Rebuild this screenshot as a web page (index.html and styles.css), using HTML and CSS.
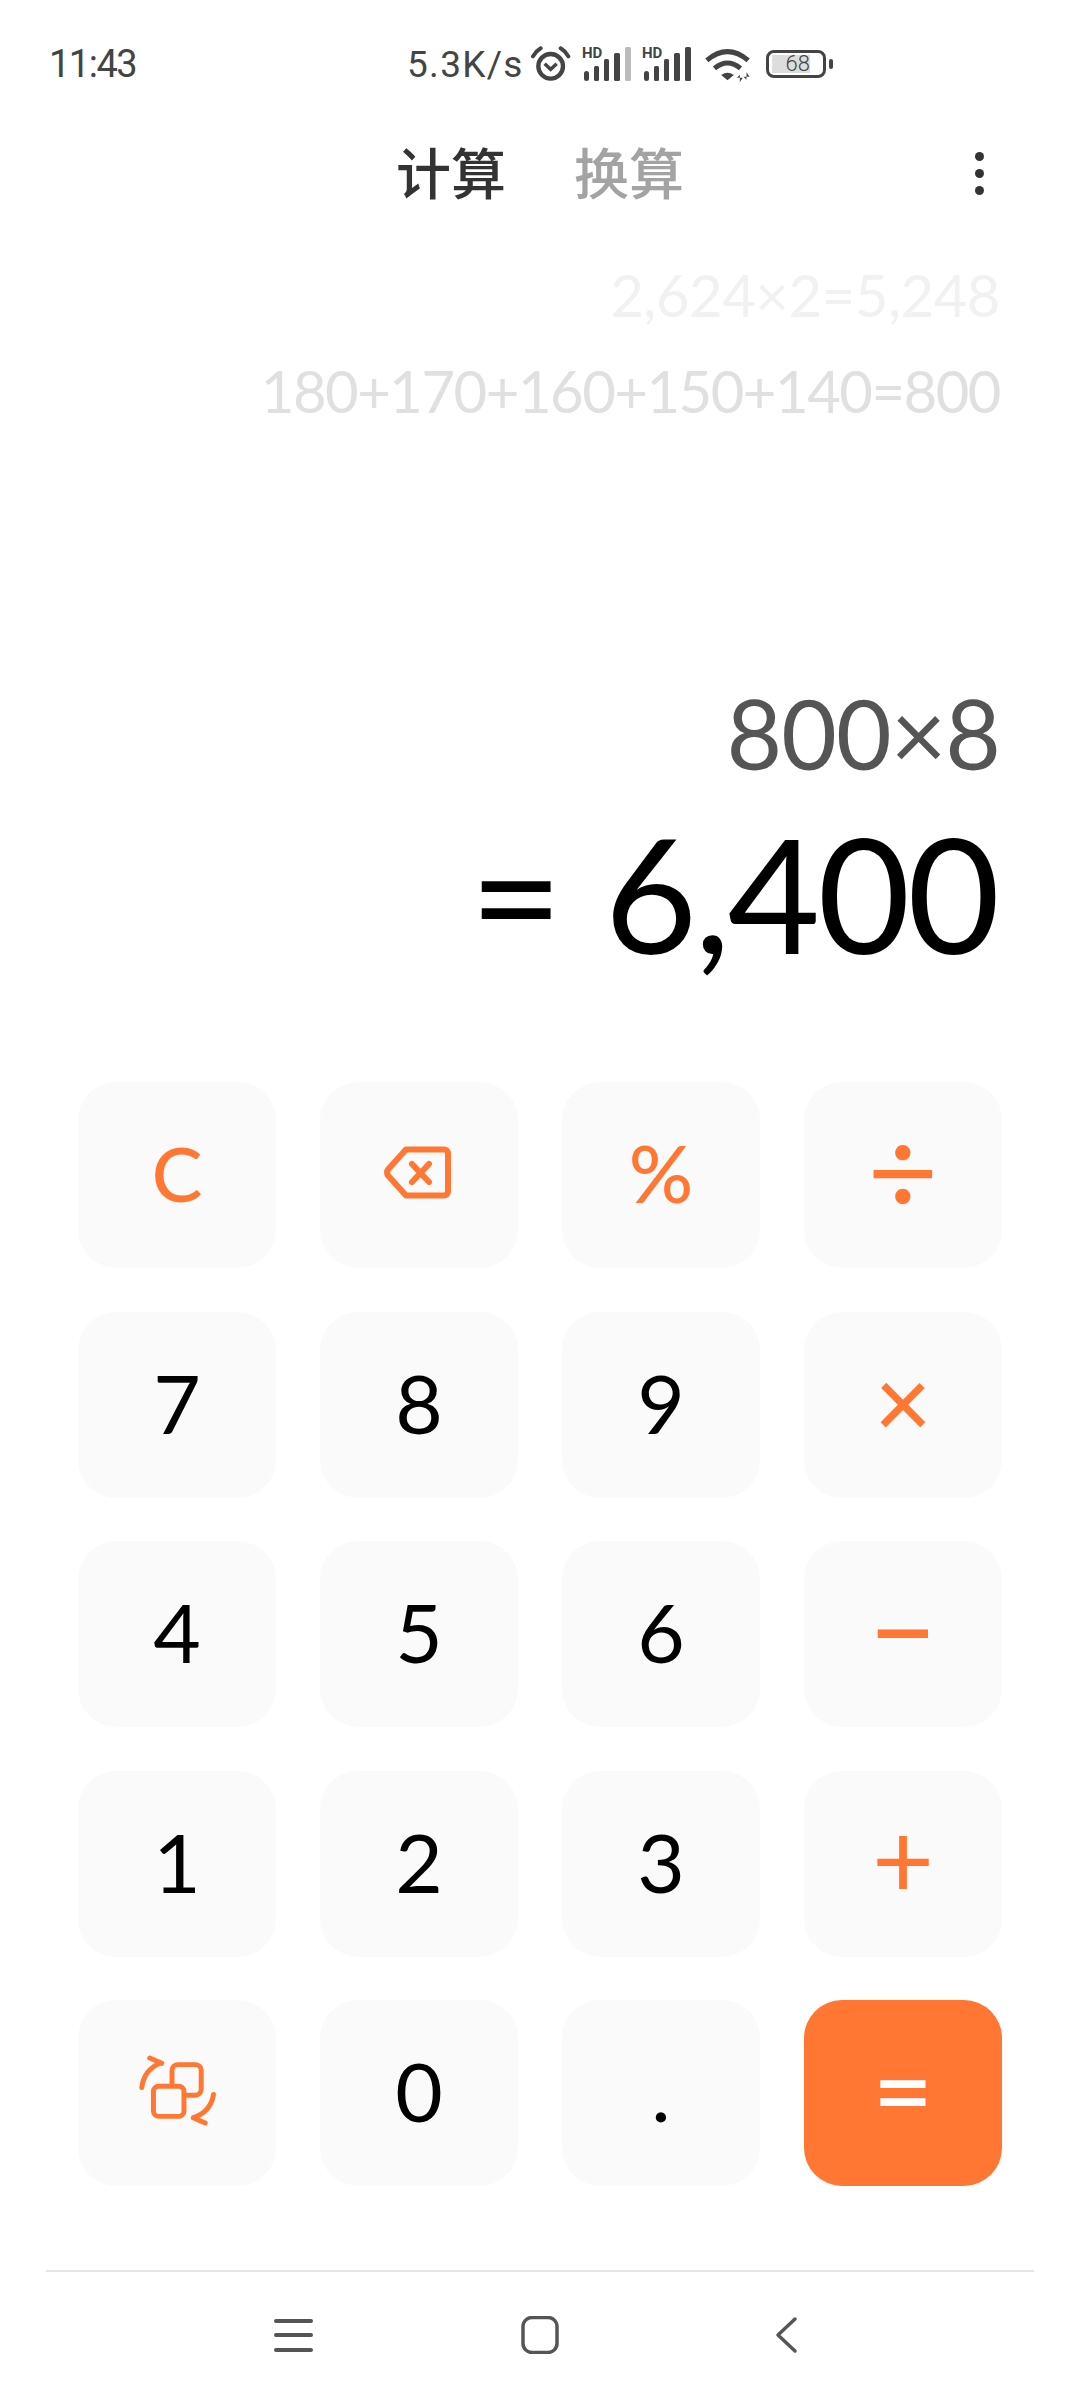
FILE: index.html
```html
<!DOCTYPE html>
<html lang="zh">
<head>
    <meta charset="UTF-8">
    <title>计算器</title>
    <link rel="stylesheet" href="styles.css">
</head>
<body>
    <div class="status">
        <span class="time">11:43</span>
        <span class="speed">5.3K/s</span>
        <svg class="ic-alarm" viewBox="450 75 126 111">
            <circle cx="512" cy="136" r="37" fill="none" stroke="#444" stroke-width="13"/>
            <path d="M494 128l18 17 18-17" fill="none" stroke="#444" stroke-width="10"/>
            <path d="M459 106q8-15 23-24M565 106q-8-15-23-24" fill="none" stroke="#444" stroke-width="12" stroke-linecap="round"/>
        </svg>
        <svg class="ic-signal" viewBox="0 -6 50 40">
            <text x="0" y="11" class="hd">HD</text>
            <rect x="2" y="24" width="5" height="10" rx="2.5" fill="#444"/>
            <rect x="12" y="19" width="5" height="15" rx="1.5" fill="#444"/>
            <rect x="22" y="12" width="5" height="22" rx="1.5" fill="#444"/>
            <rect x="32" y="6" width="6" height="28" rx="1.5" fill="#444"/>
            <rect x="43" y="0" width="6" height="34" rx="1.5" fill="#bbb"/>
        </svg>
        <svg class="ic-signal" viewBox="0 -6 50 40">
            <text x="0" y="11" class="hd">HD</text>
            <rect x="2" y="24" width="5" height="10" rx="2.5" fill="#444"/>
            <rect x="12" y="19" width="5" height="15" rx="1.5" fill="#444"/>
            <rect x="22" y="12" width="5" height="22" rx="1.5" fill="#444"/>
            <rect x="32" y="6" width="6" height="28" rx="1.5" fill="#444"/>
            <rect x="43" y="0" width="6" height="34" rx="1.5" fill="#444"/>
        </svg>
        <svg class="ic-wifi" viewBox="970 82 140 105">
            <path d="M978 122q62-52 124 0M1001 146q39-32 78 0" fill="none" stroke="#444" stroke-width="15"/>
            <path d="M1040 182l-19-16q19-14 38 0z" fill="#444"/>
            <path d="M1077 187v-22l-9 9h18zM1097 158v22l-9-9h18z" fill="#444"/>
        </svg>
        <div class="battery">
            <div class="battery-body"><span class="battery-level">68</span></div>
            <div class="battery-nib"></div>
        </div>
    </div>

    <div class="tabs">
        <div></div>
        <div class="tab-names">
            <span class="tab active">计算</span>
            <span class="tab">换算</span>
        </div>
        <div class="menu"><i></i><i></i><i></i></div>
    </div>

    <div class="display">
        <div class="history">
            <div class="old old-top">2,624×2=5,248</div>
            <div class="old">180+170+160+150+140=800</div>
        </div>
        <div class="expr">800×8</div>
        <div class="result"><span class="eq">=</span>6,400</div>
    </div>

    <div class="keypad">
        <button class="key op clear">C</button>
        <button class="key op">
            <svg class="ic-back" viewBox="0 0 70 53">
                <path d="M24 3.500H62a4 4 0 0 1 4 4V45.500a4 4 0 0 1-4 4H24L6 29.500q-2-3 0-6z" fill="none" stroke="#ff7733" stroke-width="6" stroke-linejoin="round"/>
                <path d="M30 18l17 18M47 18L30 36" fill="none" stroke="#ff7733" stroke-width="6" stroke-linecap="round"/>
            </svg>
        </button>
        <button class="key op pct">%</button>
        <button class="key op div">÷</button>
        <button class="key">7</button>
        <button class="key">8</button>
        <button class="key">9</button>
        <button class="key op mul">×</button>
        <button class="key">4</button>
        <button class="key">5</button>
        <button class="key">6</button>
        <button class="key op sub">−</button>
        <button class="key">1</button>
        <button class="key">2</button>
        <button class="key">3</button>
        <button class="key op add">+</button>
        <button class="key op">
            <svg class="ic-swap" viewBox="230 230 240 220">
                <rect x="335" y="262" width="88" height="92" rx="18" fill="none" stroke="#ff7733" stroke-width="15"/>
                <rect x="279" y="327" width="92" height="91" rx="16" fill="#fafafa" stroke="#ff7733" stroke-width="15"/>
                <path d="M244 331C248 296 266 272 298 258M268 242l36 16M460 352C455 385 435 410 400 422M435 438l-36-16" fill="none" stroke="#ff7733" stroke-width="15" stroke-linecap="round"/>
            </svg>
        </button>
        <button class="key">0</button>
        <button class="key">.</button>
        <button class="key equals">=</button>
    </div>

    <div class="nav">
        <svg class="ic-nav" viewBox="0 0 40 38">
            <path d="M3 5H38M3 19H38M3 34H38" fill="none" stroke="#555" stroke-width="4" stroke-linecap="round"/>
        </svg>
        <svg class="ic-nav" viewBox="0 0 40 38">
            <rect x="3" y="1.500" width="34" height="35" rx="9" fill="none" stroke="#555" stroke-width="3.500"/>
        </svg>
        <svg class="ic-nav" viewBox="0 0 40 38">
            <path d="M28 3L11 19l17 16" fill="none" stroke="#555" stroke-width="3.500" stroke-linecap="round" stroke-linejoin="round"/>
        </svg>
    </div>
</body>
</html>
```

FILE: styles.css
```css
body {
    margin: 0;
    width: 1080px;
    height: 2400px;
    overflow: hidden;
    background-color: white;
    font-family: Lato, "Noto Sans CJK SC", sans-serif;
}

/* status bar */
.status {
    display: flex;
    align-items: center;
    height: 124px;
    padding: 2px 0 0 49px;
    color: #444;
    font-family: Roboto, sans-serif;
}
.time {
    font-size: 38px;
    letter-spacing: -1.500px;
    width: 358px;
}
.speed {
    font-size: 37px;
    width: 123px;
    letter-spacing: 1.300px;
}
.ic-alarm {
    width: 42px;
    height: 37px;
    margin-right: 10px;
}
.ic-signal {
    width: 50px;
    height: 40px;
    margin: -6px 10px 0 0;
}
.hd {
    font-family: Roboto, sans-serif;
    font-weight: 700;
    font-size: 15px;
    fill: #444;
}
.ic-wifi {
    width: 47px;
    height: 35px;
    margin-left: 2px;
    margin-right: 15px;
}
.battery {
    display: flex;
    align-items: center;
    gap: 3px;
}
.battery-body {
    width: 60px;
    height: 28px;
    border: 3px solid #444;
    border-radius: 8px;
    box-sizing: border-box;
    padding: 2px 3px;
}
.battery-level {
    display: block;
    width: 38px;
    height: 18px;
    background-color: #ddd;
    text-align: right;
    font-size: 22px;
    font-weight: 300;
    line-height: 18px;
    white-space: nowrap;
}
.battery-nib {
    width: 4px;
    height: 10px;
    border-radius: 2px;
    background-color: #444;
}

/* calc / convert tabs */
.tabs {
    display: grid;
    grid-template-columns: 1fr auto 1fr;
    align-items: center;
    height: 88px;
}
.tab-names {
    display: flex;
    gap: 68px;
}
.tab {
    font-family: "Noto Sans CJK SC", sans-serif;
    font-size: 55px;
    font-weight: 500;
    color: #a3a3a3;
}
.tab.active {
    color: #333;
}
.menu {
    display: flex;
    flex-direction: column;
    gap: 8px;
    justify-self: end;
    margin: 6px 96px 0 0;
}
.menu i {
    width: 9px;
    height: 9px;
    border-radius: 50%;
    background-color: #333;
}

/* history and current result */
.display {
    display: flex;
    flex-direction: column;
    align-items: flex-end;
    height: 868px;
    padding-right: 80px;
}
.history {
    flex: 1;
    padding-top: 33px;
    text-align: right;
}
.old {
    font-size: 58px;
    font-weight: 400;
    letter-spacing: -1.500px;
    line-height: 96px;
    color: #e0e0e0;
}
.old-top {
    color: #f1f1f1;
    letter-spacing: -0.500px;
}
.expr {
    font-size: 96px;
    letter-spacing: -1px;
    line-height: 120px;
    color: #555;
}
.result {
    font-size: 160px;
    letter-spacing: -3px;
    line-height: 200px;
    color: black;
    margin: -1px 3px 90px 0;
}
.eq {
    margin-right: 45px;
}

/* keys */
.keypad {
    display: grid;
    grid-template-columns: repeat(4, 198px);
    grid-auto-rows: 186px;
    column-gap: 44px;
    row-gap: 43.5px;
    padding: 0 78px;
}
.key {
    display: flex;
    align-items: center;
    justify-content: center;
    padding: 0 0 6px;
    border: none;
    border-radius: 38px;
    background-color: #fafafa;
    color: black;
    font-family: Lato, sans-serif;
    font-size: 82px;
}
.key.op {
    color: #ff7733;
}
.key.clear {
    font-size: 76px;
    font-weight: 500;
    padding-bottom: 6px;
}
.key.pct {
    font-size: 80px;
    font-weight: 500;
    padding-bottom: 6px;
}
.key.div {
    font-size: 122px;
    padding-bottom: 12px;
}
.key.mul {
    font-size: 98px;
    font-weight: 500;
    padding-bottom: 10px;
}
.key.sub {
    font-size: 116px;
    font-weight: 500;
    padding-bottom: 12px;
}
.key.add {
    font-size: 107px;
    padding-bottom: 14px;
}
.key.equals {
    background-color: #ff7733;
    color: white;
    font-size: 104px;
    font-weight: 500;
    padding-bottom: 12px;
}
.ic-back {
    width: 70px;
    height: 53px;
    margin-right: 4px;
}
.ic-swap {
    width: 80px;
    height: 73px;
}

/* bottom navigation */
.nav {
    display: flex;
    justify-content: center;
    align-items: center;
    gap: 207px;
    height: 126px;
    margin: 84px 46px 0;
    border-top: 2px solid #e5e5e5;
}
.ic-nav {
    width: 40px;
    height: 38px;
}
```
